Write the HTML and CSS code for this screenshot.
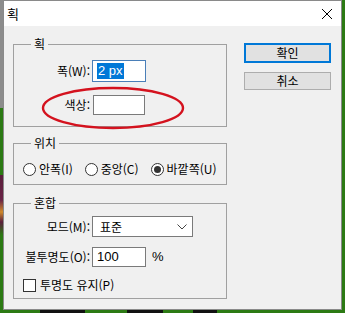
FILE: index.html
```html
<!DOCTYPE html>
<html lang="ko">
<head>
<meta charset="utf-8">
<title>획</title>
<link rel="stylesheet" href="styles.css">
</head>
<body>
<div class="window">
  <div class="titlebar">
    <span class="title">획</span>
    <svg class="close" width="12" height="12" viewBox="0 0 12 12"><path d="M1 1L11 11M11 1L1 11" stroke="#000" stroke-width="1"/></svg>
  </div>
  <div class="content">
    <div class="left">
      <div class="group g1">
        <div class="gtitle">획</div>
        <div class="row r1">
          <span class="label">폭(W):</span>
          <span class="input focus"><span class="sel">2 px</span></span>
        </div>
        <div class="row r2">
          <span class="label">색상:</span>
          <span class="input color"></span>
        </div>
        <svg class="ellipse" width="144" height="44" viewBox="0 0 144 44"><ellipse cx="72" cy="22" rx="70" ry="20" fill="none" stroke="#d4121e" stroke-width="2.4"/></svg>
      </div>
      <div class="group g2">
        <div class="gtitle">위치</div>
        <div class="radios">
          <span class="radio"><span class="circle"></span>안폭(I)</span>
          <span class="radio"><span class="circle"></span>중앙(C)</span>
          <span class="radio"><span class="circle checked"></span>바깥쪽(U)</span>
        </div>
      </div>
      <div class="group g3">
        <div class="gtitle">혼합</div>
        <div class="row r3">
          <span class="label">모드(M):</span>
          <span class="select"><span>표준</span><svg width="10" height="6" viewBox="0 0 10 6"><path d="M0.5 0.5L5 5L9.5 0.5" fill="none" stroke="#444" stroke-width="1"/></svg></span>
        </div>
        <div class="row r4">
          <span class="label">불투명도(O):</span>
          <span class="input num"><span class="num-text">100</span></span>
          <span class="pct">%</span>
        </div>
        <div class="check-row">
          <span class="box"></span>투명도 유지(P)
        </div>
      </div>
    </div>
    <div class="right">
      <div class="btn ok">확인</div>
      <div class="btn cancel">취소</div>
    </div>
  </div>
</div>
</body>
</html>
```

FILE: styles.css
```css
html, body {
  margin: 0;
  padding: 0;
}
body {
  width: 345px;
  height: 313px;
  overflow: hidden;
  font-family: "Noto Sans CJK KR", "Liberation Sans", sans-serif;
  font-size: 12px;
  line-height: 16px;
  color: #000;
  background:
    linear-gradient(to right, transparent 40px, #111 40px, #111 85px, transparent 85px, transparent 127px, #111 127px, #111 163px, transparent 163px, transparent 193px, #111 193px, #111 217px, transparent 217px) 0 310px / 345px 3px no-repeat,
    linear-gradient(to bottom, #8c8c8c 0, #8c8c8c 108px, #2c7a14 108px, #2c7a14 175px, #5a1e3c 175px, #6a2446 200px, #d08a2a 212px, #5a1e3c 222px, #2c7a14 235px) 0 0 / 3px 313px no-repeat,
    #2c7a14;
}
.window {
  margin-left: 3px;
  width: 339px;
  height: 310px;
  box-sizing: border-box;
  border: 1px solid #8a8a8a;
  background: #f0f0f0;
  display: flex;
  flex-direction: column;
}
.titlebar {
  height: 25px;
  background: #fff;
  display: flex;
  align-items: center;
  justify-content: space-between;
  padding: 0 8px 0 3px;
}
.title {
  font-size: 13px;
}
.content {
  display: flex;
  padding: 18px 0 0 9px;
}
.left {
  width: 214px;
}
.group {
  position: relative;
  border: 1px solid #a0a0a0;
}
.gtitle {
  width: fit-content;
  margin: -9px 0 0 17px;
  padding: 0 3px;
  background: #f0f0f0;
  line-height: 16px;
}
.row {
  display: flex;
  align-items: center;
}
.label {
  width: 76px;
  margin-right: 2px;
  text-align: right;
}
.input {
  box-sizing: border-box;
  display: flex;
  align-items: center;
  background: #fff;
  border: 1px solid #7a7a7a;
}
.g1 {
  padding-bottom: 11px;
}
.r1 {
  margin-top: 8px;
}
.input.focus {
  width: 54px;
  height: 22px;
  border-color: #4a7fb8;
  padding-left: 4px;
}
.sel {
  background: #0078d7;
  color: #fff;
  font-family: "Liberation Sans", sans-serif;
  font-size: 13px;
  line-height: 16px;
  padding: 0 1px;
}
.r2 {
  margin-top: 13px;
}
.input.color {
  width: 52px;
  height: 20px;
  margin-left: 1px;
}
.ellipse {
  position: absolute;
  left: 27px;
  top: 41px;
}
.g2 {
  margin-top: 16px;
  padding-bottom: 7px;
}
.radios {
  display: flex;
  gap: 12px;
  margin-top: 10px;
  padding-left: 9px;
}
.radio {
  display: flex;
  align-items: center;
  gap: 3px;
}
.circle {
  box-sizing: border-box;
  width: 13px;
  height: 13px;
  border: 1px solid #333;
  border-radius: 50%;
  background: #fff;
  display: flex;
  align-items: center;
  justify-content: center;
}
.circle.checked::after {
  content: "";
  width: 7px;
  height: 7px;
  border-radius: 50%;
  background: #333;
}
.g3 {
  margin-top: 18px;
  padding-bottom: 5px;
}
.r3 {
  margin-top: 5px;
}
.select {
  box-sizing: border-box;
  width: 101px;
  height: 21px;
  background: #fff;
  border: 1px solid #7a7a7a;
  display: flex;
  align-items: center;
  justify-content: space-between;
  padding: 0 5px 0 7px;
}
.select svg {
  display: block;
}
.r4 {
  margin-top: 10px;
}
.input.num {
  width: 54px;
  height: 20px;
  padding-left: 4px;
}
.num-text {
  font-family: "Liberation Sans", sans-serif;
  font-size: 13px;
}
.pct {
  margin-left: 6px;
  font-family: "Liberation Sans", sans-serif;
  font-size: 13px;
}
.check-row {
  display: flex;
  align-items: center;
  gap: 4px;
  margin-top: 10px;
  padding-left: 9px;
}
.box {
  box-sizing: border-box;
  width: 13px;
  height: 13px;
  border: 1px solid #333;
  background: #fff;
}
.right {
  margin-left: 17px;
  margin-top: -1px;
  display: flex;
  flex-direction: column;
}
.btn {
  box-sizing: border-box;
  width: 87px;
  background: #e1e1e1;
  border: 1px solid #adadad;
  display: flex;
  align-items: center;
  justify-content: center;
}
.btn.ok {
  height: 20px;
  border: 2px solid #0078d7;
}
.btn.cancel {
  height: 18px;
  margin-top: 9px;
}
```
